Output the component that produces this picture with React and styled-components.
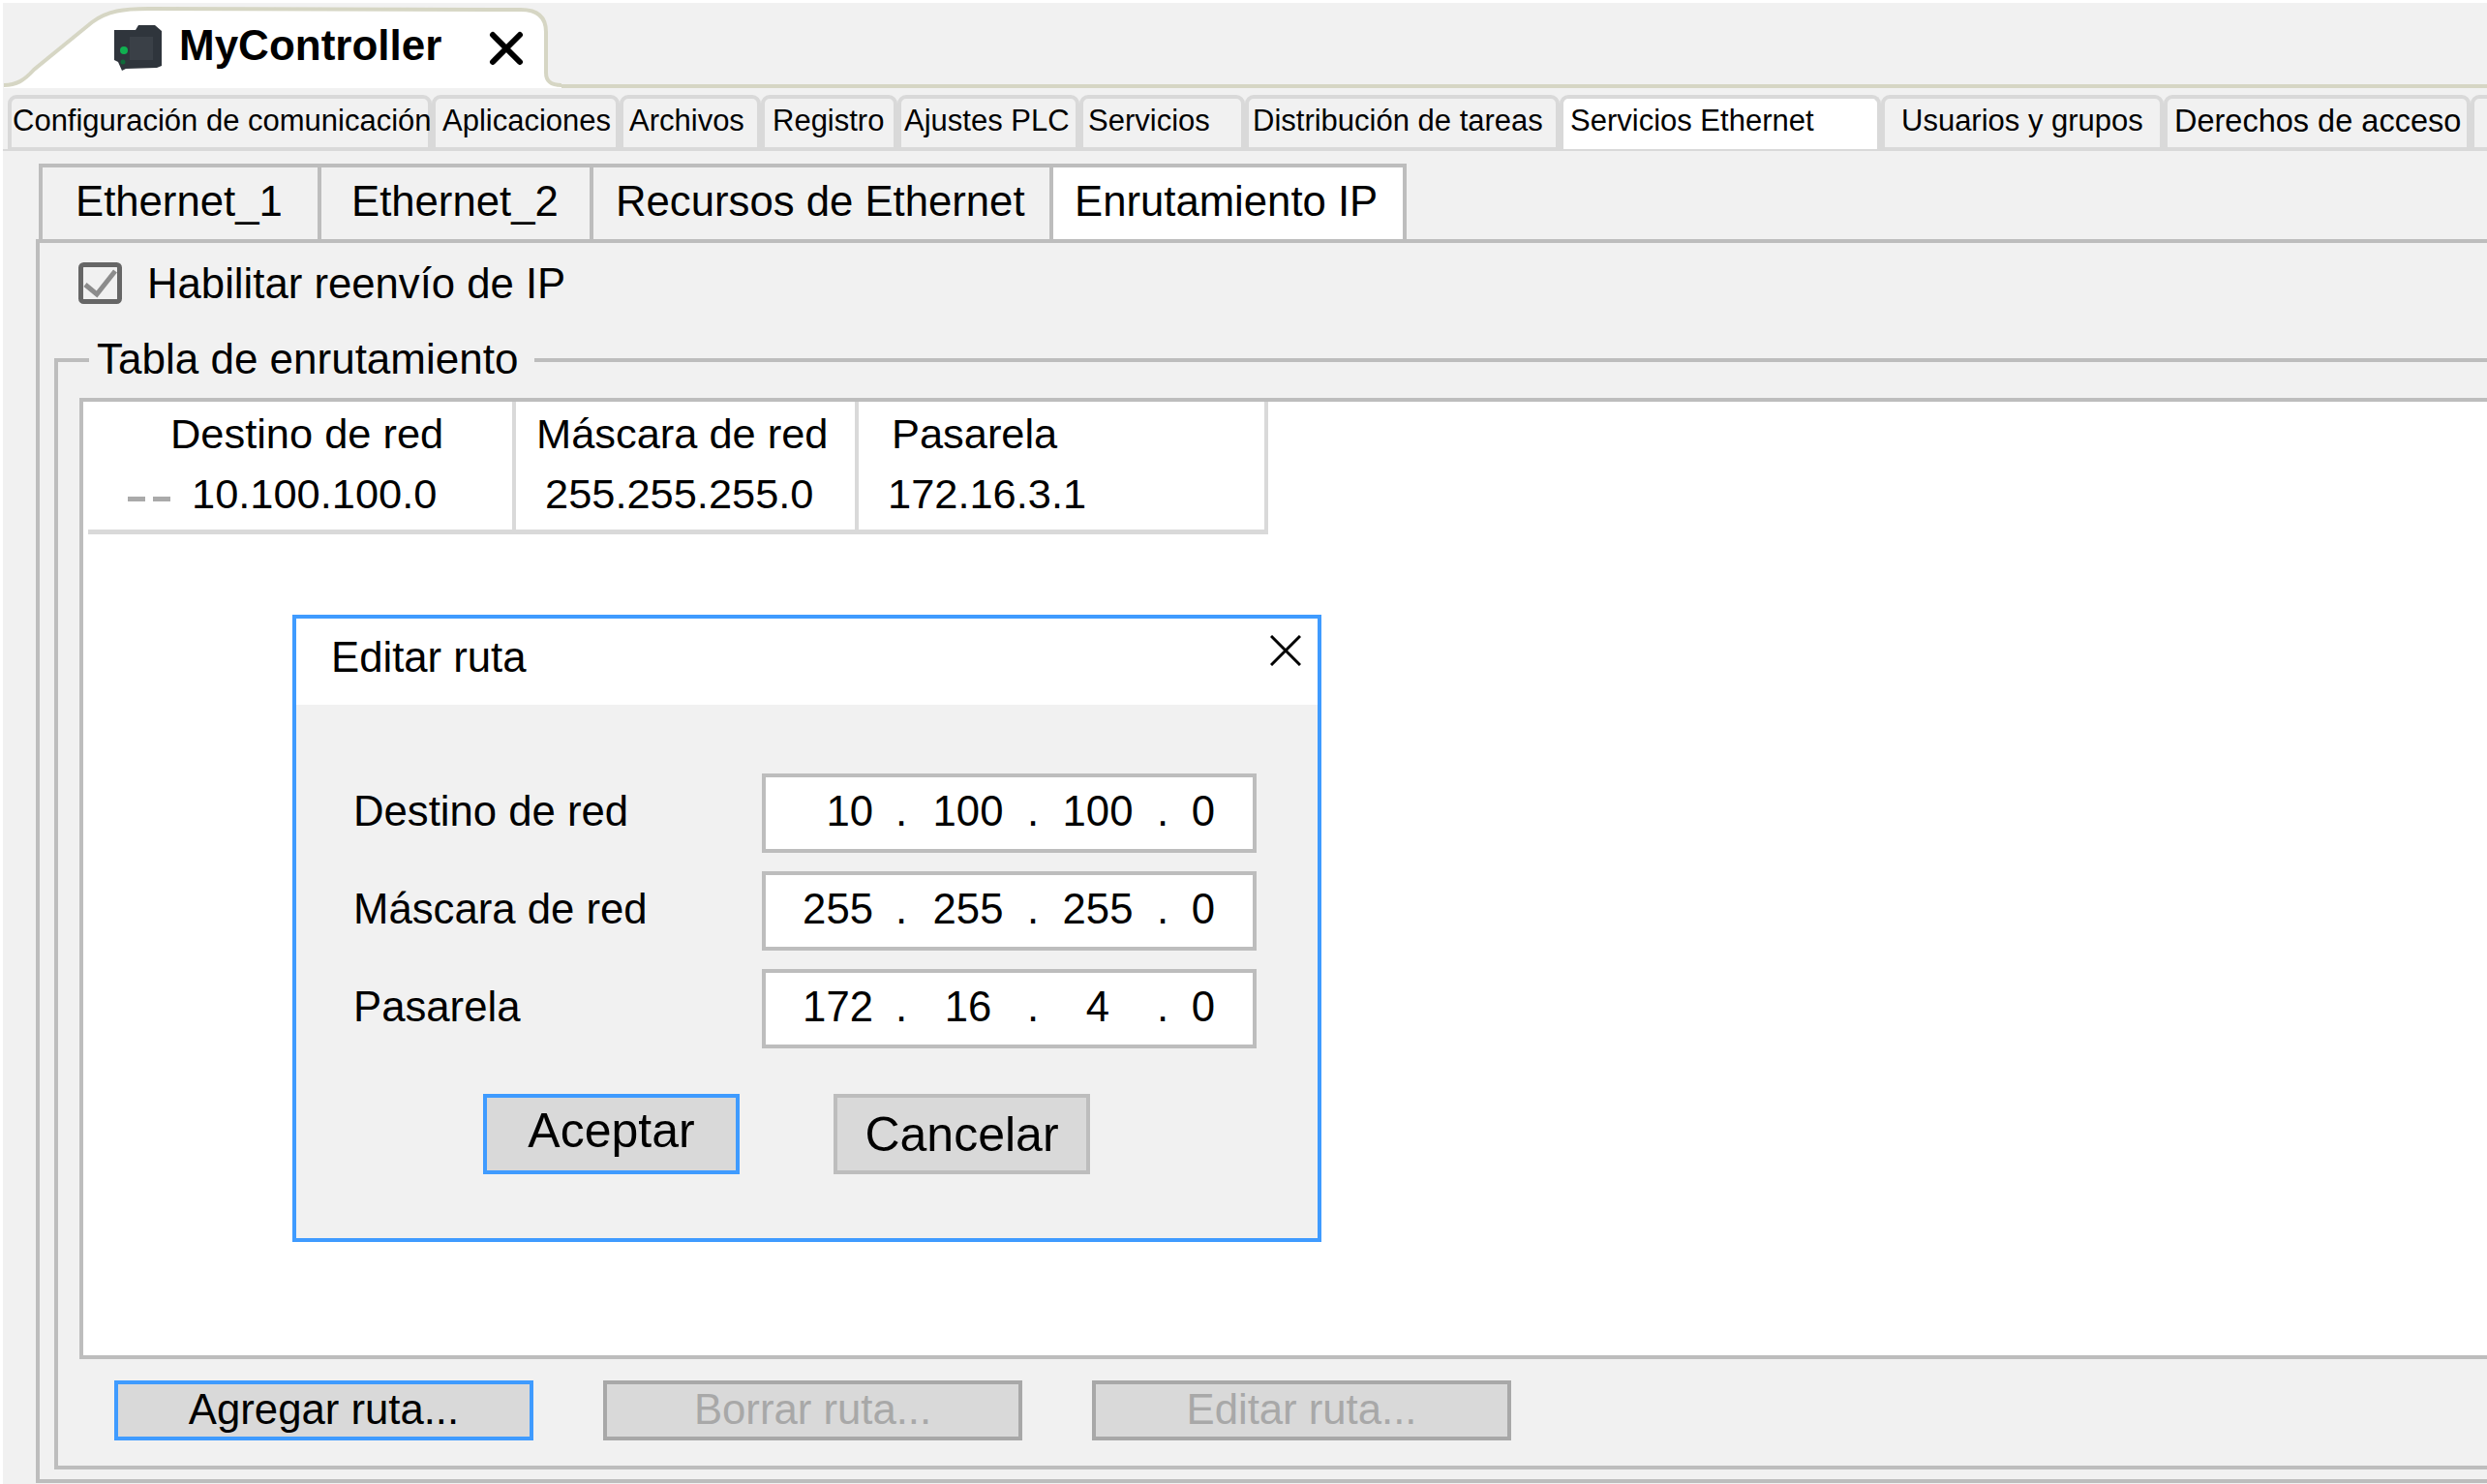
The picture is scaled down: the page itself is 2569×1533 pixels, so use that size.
import React from "react";
import styled, { createGlobalStyle } from "styled-components";

const Global = createGlobalStyle`
  html, body { margin: 0; padding: 0; background: #fff; }
  * { box-sizing: border-box; }
  body { font-family: "Liberation Sans", Arial, sans-serif; color: #000; }
`;

const Page = styled.div`
  width: 2569px;
  height: 1533px;
  overflow: hidden;
  background: #fff;
  padding: 3px 0 0 3px;
`;
const Surface = styled.div`
  width: 2566px;
  height: 1530px;
  background: #f1f1f1;
  display: flex;
  flex-direction: column;
`;
const TitleBar = styled.div`
  display: flex;
  height: 88px;
  flex: none;
`;
const TitleTab = styled.div`
  position: relative;
  width: 577px;
  display: flex;
  align-items: center;
  padding: 0 0 4px 115px;
  flex: none;
`;
const TitleShape = styled.svg`
  position: absolute;
  inset: 0;
`;
const ControllerIcon = styled.svg`
  position: relative;
  flex: none;
  margin-top: 10px;
  filter: blur(0.6px);
`;
const TitleText = styled.span`
  position: relative;
  font-size: 44px;
  font-weight: 700;
  line-height: 50px;
  margin: 4px 0 0 17px;
  width: 320px;
  flex: none;
`;
const TitleClose = styled.svg`
  position: relative;
  flex: none;
  margin-top: 10px;
`;
const TitleRule = styled.div`
  flex: 1;
  border-bottom: 4px solid #d6d6c4;
`;

const ModuleTabs = styled.div`
  display: flex;
  height: 58px;
  margin-top: 7px;
  padding-left: 5px;
  border-bottom: 2px solid #d9d9d9;
  flex: none;
`;
const ModuleTab = styled.div`
  width: ${(p) => p.$w}px;
  height: 56px;
  flex: none;
  border: 4px solid #d9d9d9;
  border-bottom: ${(p) => (p.$active ? "0" : "2px solid #d9d9d9")};
  border-radius: 9px 9px 0 0;
  background: ${(p) => (p.$active ? "#fff" : "#f1f1f1")};
  padding-left: ${(p) => p.$pad}px;
  font-size: ${(p) => p.$size || 31}px;
  line-height: 46px;
  white-space: nowrap;
  overflow: visible;
`;

const PanelTabs = styled.div`
  display: flex;
  height: 78px;
  margin: 13px 0 0 37px;
  flex: none;
`;
const PanelTab = styled.div`
  width: ${(p) => p.$w}px;
  flex: none;
  border-top: 4px solid #bdbdbd;
  border-right: 4px solid #bdbdbd;
  border-left: ${(p) => (p.$first ? "4px solid #bdbdbd" : "0")};
  background: ${(p) => (p.$active ? "#fff" : "#f1f1f1")};
  padding-left: ${(p) => p.$pad}px;
  font-size: 43.7px;
  line-height: 70px;
  white-space: nowrap;
`;

const Panel = styled.div`
  flex: 1;
  margin-left: 34px;
  border-top: 4px solid #bdbdbd;
  border-left: 4px solid #bdbdbd;
  border-bottom: 4px solid #bdbdbd;
  margin-bottom: 1px;
  display: flex;
  flex-direction: column;
  min-height: 0;
`;
const CheckRow = styled.div`
  display: flex;
  align-items: center;
  gap: 26px;
  height: 43px;
  margin: 20px 0 0 40px;
  font-size: 43.7px;
  flex: none;
`;
const CheckLabel = styled.span`
  line-height: 50px;
  margin-top: 1px;
`;
const CheckGlyph = styled.svg`
  filter: blur(0.7px);
  flex: none;
`;
const GroupBox = styled.fieldset`
  flex: 1;
  min-height: 0;
  min-width: 0;
  margin: 31px 0 10px 15px;
  padding: 12px 0 0 22px;
  border: 4px solid #bdbdbd;
  border-right: 0;
  display: flex;
  flex-direction: column;
`;
const GroupLegend = styled.legend`
  margin-left: 10px;
  padding: 0 17px 2px 8px;
  font-size: 44px;
  line-height: 52px;
`;
const TableBox = styled.div`
  position: relative;
  flex: 1;
  min-height: 0;
  background: #fff;
  border: 4px solid #bdbdbd;
  border-right: 0;
`;
const RouteTable = styled.div`
  display: grid;
  grid-template-columns: 442px 354px 423px;
  grid-template-rows: 66px 66px;
  width: fit-content;
  margin-left: 5px;
  border-bottom: 5px solid #d9d9d9;
`;
const Cell = styled.div`
  display: flex;
  align-items: ${(p) => (p.$head ? "center" : "flex-start")};
  padding-left: ${(p) => p.$pad}px;
  font-size: 43.4px;
  line-height: 58px;
  border-right: 4px solid #d9d9d9;
  white-space: nowrap;
`;
const Dashes = styled.span`
  display: flex;
  gap: 8px;
  margin: 32px 22px 0 0;
  flex: none;
`;
const Dash = styled.i`
  display: block;
  width: 18px;
  height: 5px;
  background: #aaa;
`;

const Dialog = styled.div`
  position: absolute;
  left: 216px;
  top: 220px;
  width: 1063px;
  height: 648px;
  border: 4px solid #3f9bff;
  background: #f1f1f1;
  display: flex;
  flex-direction: column;
`;
const DialogHead = styled.div`
  height: 89px;
  background: #fff;
  display: flex;
  justify-content: space-between;
  align-items: flex-start;
  padding: 15px 17px 0 36px;
  font-size: 43.7px;
  line-height: 50px;
  flex: none;
`;
const DialogClose = styled.svg`
  margin-top: 2px;
`;
const DialogBody = styled.div`
  flex: 1;
  padding: 71px 0 0 59px;
  display: flex;
  flex-direction: column;
  gap: 19px;
`;
const FormRow = styled.div`
  display: flex;
  align-items: center;
  font-size: 43.7px;
`;
const FormLabel = styled.span`
  width: 422px;
  flex: none;
  margin-top: -4px;
`;
const IpField = styled.div`
  width: 511px;
  height: 82px;
  border: 4px solid #bdbdbd;
  background: #fff;
  display: flex;
  align-items: center;
  padding: 0 0 4px 31px;
  flex: none;
`;
const Octet = styled.span`
  width: ${(p) => p.$w}px;
  text-align: ${(p) => p.$align};
  flex: none;
`;
const Dot = styled.span`
  width: ${(p) => p.$w}px;
  text-align: center;
  flex: none;
`;
const DialogActions = styled.div`
  display: flex;
  gap: 97px;
  margin: 28px 0 0 134px;
`;
const ActionButton = styled.div`
  width: 265px;
  height: 83px;
  border: 4px solid ${(p) => (p.$focus ? "#3f9bff" : "#bdbdbd")};
  background: #d9d9d9;
  display: flex;
  align-items: center;
  justify-content: center;
  padding-bottom: ${(p) => (p.$focus ? "8px" : "0")};
  font-size: 50px;
`;
const RouteActions = styled.div`
  display: flex;
  gap: 72px;
  padding: 22px 0 26px 36px;
  flex: none;
`;
const RouteButton = styled.div`
  width: 433px;
  height: 62px;
  border: 4px solid ${(p) => (p.$focus ? "#3f9bff" : "#a8a8a8")};
  background: #d9d9d9;
  color: ${(p) => (p.$focus ? "#000" : "#a8a8a8")};
  display: flex;
  align-items: center;
  justify-content: center;
  font-size: 43.7px;
  padding-bottom: 3px;
`;

const moduleTabs = [
  ["Configuración de comunicación", 438, 1],
  ["Aplicaciones", 194, 7],
  ["Archivos", 146, 6],
  ["Registro", 141, 8],
  ["Ajustes PLC", 188, 3],
  ["Servicios", 171, 5],
  ["Distribución de tareas", 325, 4],
  ["Servicios Ethernet", 332, 7],
  ["Usuarios y grupos", 292, 17],
  ["Derechos de acceso", 317, 7, 32.5],
  ["", 40, 0],
];
const ACTIVE_MODULE = "Servicios Ethernet";
const panelTabs = [
  ["Ethernet_1", 292, 34],
  ["Ethernet_2", 281, 31],
  ["Recursos de Ethernet", 475, 23],
  ["Enrutamiento IP", 365, 22, true],
];
const rows = [
  ["Destino de red", "10", "100", "100", "0"],
  ["Máscara de red", "255", "255", "255", "0"],
  ["Pasarela", "172", "16", "4", "0"],
];

export default function App() {
  return (
    <Page>
      <Global />
      <Surface>
        <TitleBar>
          <TitleTab>
            <TitleShape width="577" height="88" viewBox="0 0 577 88">
              <path
                d="M1,85 C14,85 20,80 30,69 L92,20 C108,8 125,6 150,6 L535,7 C552,7 561,14 561,30 L561,72 C561,81 566,85 577,85 L577,88 L1,88 Z"
                fill="#fff"
                stroke="none"
              />
              <path
                d="M1,85 C14,85 22,80 32,69 L92,20 C108,8 125,6 150,6 L535,7 C552,7 561,14 561,30 L561,72 C561,81 566,85 577,85"
                fill="none"
                stroke="#d6d6c4"
                strokeWidth="4"
              />
            </TitleShape>
            <ControllerIcon width="50" height="48" viewBox="0 0 50 48">
              <path d="M0,5 L22,5 L25,0 L42,0 L49,6 L49,42 L44,44 L12,45 L8,47 L4,38 L0,36 Z" fill="#2f353c" />
              <path d="M16,12 L40,12 L40,36 L16,36 Z" fill="#3a4047" />
              <circle cx="10" cy="26" r="4" fill="#10b050" />
              <circle cx="9" cy="38" r="2.5" fill="#0f6a3a" />
            </ControllerIcon>
            <TitleText>MyController</TitleText>
            <TitleClose width="36" height="36" viewBox="0 0 36 36">
              <path d="M4,4 L32,32 M32,4 L4,32" stroke="#000" strokeWidth="6" strokeLinecap="round" />
            </TitleClose>
          </TitleTab>
          <TitleRule />
        </TitleBar>

        <ModuleTabs>
          {moduleTabs.map(([label, w, pad, size], i) => (
            <ModuleTab key={i} $w={w} $pad={pad} $size={size} $active={label === ACTIVE_MODULE}>
              {label}
            </ModuleTab>
          ))}
        </ModuleTabs>

        <PanelTabs>
          {panelTabs.map(([label, w, pad, active], i) => (
            <PanelTab key={label} $w={w} $pad={pad} $active={active} $first={i === 0}>
              {label}
            </PanelTab>
          ))}
        </PanelTabs>

        <Panel>
          <CheckRow>
            <CheckGlyph width="45" height="43" viewBox="0 0 45 43">
              <rect x="2.5" y="2.5" width="40" height="38" rx="3" fill="#f1f1f1" stroke="#666" strokeWidth="5" />
              <path d="M7,23 L19,33 L38,9" fill="none" stroke="#8c8c8c" strokeWidth="5" />
            </CheckGlyph>
            <CheckLabel>Habilitar reenvío de IP</CheckLabel>
          </CheckRow>

          <GroupBox>
            <GroupLegend>Tabla de enrutamiento</GroupLegend>
            <TableBox>
              <RouteTable>
                <Cell $head $pad={85}>Destino de red</Cell>
                <Cell $head $pad={21}>Máscara de red</Cell>
                <Cell $head $pad={34}>Pasarela</Cell>
                <Cell $pad={41}>
                  <Dashes>
                    <Dash />
                    <Dash />
                  </Dashes>
                  10.100.100.0
                </Cell>
                <Cell $pad={30}>255.255.255.0</Cell>
                <Cell $pad={30}>172.16.3.1</Cell>
              </RouteTable>

              <Dialog>
                <DialogHead>
                  <span>Editar ruta</span>
                  <DialogClose width="32" height="32" viewBox="0 0 32 32">
                    <path d="M1,1 L31,31 M31,1 L1,31" stroke="#000" strokeWidth="3" />
                  </DialogClose>
                </DialogHead>
                <DialogBody>
                  {rows.map(([label, a, b, c, d]) => (
                    <FormRow key={label}>
                      <FormLabel>{label}</FormLabel>
                      <IpField>
                        <Octet $w={80} $align="right">{a}</Octet>
                        <Dot $w={58}>.</Dot>
                        <Octet $w={80} $align="center">{b}</Octet>
                        <Dot $w={54}>.</Dot>
                        <Octet $w={80} $align="center">{c}</Octet>
                        <Dot $w={54}>.</Dot>
                        <Octet $w={30} $align="center">{d}</Octet>
                      </IpField>
                    </FormRow>
                  ))}
                  <DialogActions>
                    <ActionButton $focus>Aceptar</ActionButton>
                    <ActionButton>Cancelar</ActionButton>
                  </DialogActions>
                </DialogBody>
              </Dialog>
            </TableBox>
            <RouteActions>
              <RouteButton $focus>Agregar ruta...</RouteButton>
              <RouteButton>Borrar ruta...</RouteButton>
              <RouteButton>Editar ruta...</RouteButton>
            </RouteActions>
          </GroupBox>
        </Panel>
      </Surface>
    </Page>
  );
}
